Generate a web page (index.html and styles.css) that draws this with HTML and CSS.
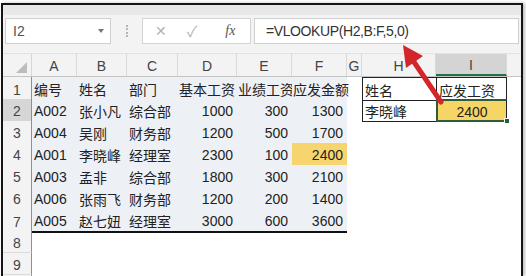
FILE: index.html
```html
<!DOCTYPE html>
<html lang="zh-CN">
<head>
  <meta charset="UTF-8" />
  <title>VLOOKUP</title>
  <link rel="stylesheet" href="styles.css">
</head>
<body>

  <div class="frame">
    <div class="ribbon-edge"></div>

    <div class="formula-bar">
      <div class="name-box"><span>I2</span><span class="dd"></span></div>
      <div class="grip"></div>
      <div class="fx-buttons">
        <span class="cancel">✕</span>
        <span class="ok">✓</span>
        <span class="fx">fx</span>
      </div>
      <div class="formula">=VLOOKUP(H2,B:F,5,0)</div>
    </div>

    <div class="sheet">
      <div class="row head">
        <div class="corner"><span></span></div>
        <div class="col">A</div><div class="col">B</div><div class="col">C</div>
        <div class="col">D</div><div class="col">E</div><div class="col">F</div>
        <div class="col">G</div><div class="col">H</div><div class="col active">I</div>
        <div class="col rest"></div>
      </div>

      <div class="row first">
        <div class="rn">1</div>
        <div class="c t">编号</div><div class="c t">姓名</div><div class="c t">部门</div>
        <div class="c t tight">基本工资</div><div class="c t tight">业绩工资</div><div class="c t tight">应发金额</div>
        <div class="c"></div>
        <div class="c box">姓名</div><div class="c box">应发工资</div>
        <div class="c"></div>
      </div>

      <div class="row">
        <div class="rn active">2</div>
        <div class="c t">A002</div><div class="c t">张小凡</div><div class="c t">综合部</div>
        <div class="c t n">1000</div><div class="c t n">300</div><div class="c t n">1300</div>
        <div class="c"></div>
        <div class="c box">李晓峰</div><div class="c box sel">2400<i></i></div>
        <div class="c"></div>
      </div>

      <div class="row">
        <div class="rn">3</div>
        <div class="c t">A004</div><div class="c t">吴刚</div><div class="c t">财务部</div>
        <div class="c t n">1200</div><div class="c t n">500</div><div class="c t n">1700</div>
        <div class="c"></div><div class="c"></div><div class="c"></div><div class="c"></div>
      </div>

      <div class="row">
        <div class="rn">4</div>
        <div class="c t">A001</div><div class="c t">李晓峰</div><div class="c t">经理室</div>
        <div class="c t n">2300</div><div class="c t n">100</div><div class="c t n yellow">2400</div>
        <div class="c"></div><div class="c"></div><div class="c"></div><div class="c"></div>
      </div>

      <div class="row">
        <div class="rn">5</div>
        <div class="c t">A003</div><div class="c t">孟非</div><div class="c t">综合部</div>
        <div class="c t n">1800</div><div class="c t n">300</div><div class="c t n">2100</div>
        <div class="c"></div><div class="c"></div><div class="c"></div><div class="c"></div>
      </div>

      <div class="row">
        <div class="rn">6</div>
        <div class="c t">A006</div><div class="c t">张雨飞</div><div class="c t">财务部</div>
        <div class="c t n">1200</div><div class="c t n">200</div><div class="c t n">1400</div>
        <div class="c"></div><div class="c"></div><div class="c"></div><div class="c"></div>
      </div>

      <div class="row last">
        <div class="rn">7</div>
        <div class="c t">A005</div><div class="c t">赵七妞</div><div class="c t">经理室</div>
        <div class="c t n">3000</div><div class="c t n">600</div><div class="c t n">3600</div>
        <div class="c"></div><div class="c"></div><div class="c"></div><div class="c"></div>
      </div>

      <div class="row"><div class="rn">8</div></div>
      <div class="row"><div class="rn">9</div></div>
      <div class="row"><div class="rn"></div></div>
    </div>
  </div>

  <svg class="arrow" width="526" height="276" viewBox="0 0 526 276">
    <line x1="441" y1="102" x2="414" y2="62" stroke="#d3252a" stroke-width="5" stroke-linecap="round" />
    <polygon points="403,45 423,56 406,68" fill="#d3252a" />
  </svg>

</body>
</html>
```

FILE: styles.css
```css
* { box-sizing: border-box; }

body {
  margin: 0;
  background: #fff;
  font-family: "Liberation Sans", "Noto Sans CJK SC", sans-serif;
  color: #222;
  position: relative;
  width: 526px;
  height: 276px;
  overflow: hidden;
}

.frame {
  margin: 3px 0 0 1px;
  width: 522px;
  height: 273px;
  overflow: hidden;
  border: 2px solid #151515;
  border-bottom: none;
  background: #fff;
  box-shadow: 2px 0 3px rgba(0, 0, 0, 0.25);
}

.ribbon-edge {
  height: 10px;
  background: #e8e8e8;
}

/* formula bar */
.formula-bar {
  display: flex;
  align-items: center;
  height: 39px;
  padding: 0 2px 7px 2px;
  background: #f3f3f3;
  border-bottom: 1px solid #e2e2e2;
}

.name-box {
  width: 106px;
  height: 26px;
  background: #fff;
  border: 1px solid #cfcfcf;
  display: flex;
  align-items: center;
  justify-content: space-between;
  padding: 0 6px 0 7px;
  font-size: 14px;
  color: #555;
}

.name-box .dd {
  width: 0;
  height: 0;
  border-left: 3px solid transparent;
  border-right: 3px solid transparent;
  border-top: 4px solid #777;
}

.grip {
  width: 1px;
  height: 12px;
  margin: 0 14px 0 15px;
  border-left: 2px dotted #b5b5b5;
}

.fx-buttons {
  width: 109px;
  height: 26px;
  background: #fff;
  border: 1px solid #d4d4d4;
  display: flex;
  align-items: center;
  padding-left: 12px;
  gap: 20px;
  color: #b4b4b4;
  font-size: 14px;
}

.fx-buttons .ok { font-size: 15px; }

.fx-buttons .fx {
  margin-left: 8px;
  font-family: "Liberation Serif", serif;
  font-style: italic;
  color: #555;
  font-size: 14px;
}

.formula {
  flex: 1;
  height: 26px;
  margin-left: 3px;
  background: #fff;
  border: 1px solid #cfcfcf;
  display: flex;
  align-items: center;
  padding-left: 11px;
  font-size: 14px;
  letter-spacing: -0.4px;
  color: #333;
}

/* sheet grid */
.row {
  display: grid;
  grid-template-columns: 29px 45px 50px 51px 59px 55px 55px 15px 74px 71px 1fr;
  height: 22px;
  font-size: 14px;
}

.row.head {
  height: 23px;
  background: #f3f3f3;
  border-bottom: 1px solid #c4c4c4;
}

.corner {
  position: relative;
  border-right: 1px solid #d6d6d6;
}

.corner span {
  position: absolute;
  right: 4px;
  bottom: 3px;
  width: 0;
  height: 0;
  border-left: 11px solid transparent;
  border-bottom: 11px solid #bdbdbd;
}

.col {
  display: flex;
  align-items: center;
  justify-content: center;
  color: #444;
  border-right: 1px solid #dadada;
  padding-top: 2px;
}

.col.rest { border-right: none; }

.col.active {
  background: #d4d4d4;
  border-bottom: 2px solid #217346;
}

.rn {
  display: flex;
  align-items: center;
  justify-content: center;
  padding-top: 2px;
  background: #f3f3f3;
  color: #444;
  border-right: 1px solid #8f8f8f;
  border-bottom: 1px solid #dcdcdc;
}

.rn.active { background: #d6d6d6; }

.c {
  display: flex;
  align-items: center;
  padding: 2px 0 0 2px;
  white-space: nowrap;
  position: relative;
}

.c.t {
  background: #edf1f6;
  border-bottom: 1px solid #fff;
}

.c.tight { padding-left: 1px; }

.c.n {
  justify-content: flex-end;
  padding-right: 4px;
}

.c.yellow { background: #f6d56f; }

.row.first .c.t { border-bottom: 2px solid #111; }
.row.last .c.t { border-bottom: 2px solid #111; }

.c.box {
  border-left: 1px solid #222;
  border-bottom: 1px solid #222;
}

.row.first .c.box { border-top: 1px solid #222; }
.c.box + .c.box { border-right: 1px solid #222; }

.c.sel {
  justify-content: center;
  background: #f5d563;
  border: 2px solid #2e5b3c;
  padding-left: 0;
}

.c.sel i {
  position: absolute;
  right: -4px;
  bottom: -4px;
  width: 6px;
  height: 6px;
  background: #2e5b3c;
  border: 1px solid #fff;
}

.arrow {
  position: absolute;
  top: 0;
  left: 0;
  pointer-events: none;
}
```
